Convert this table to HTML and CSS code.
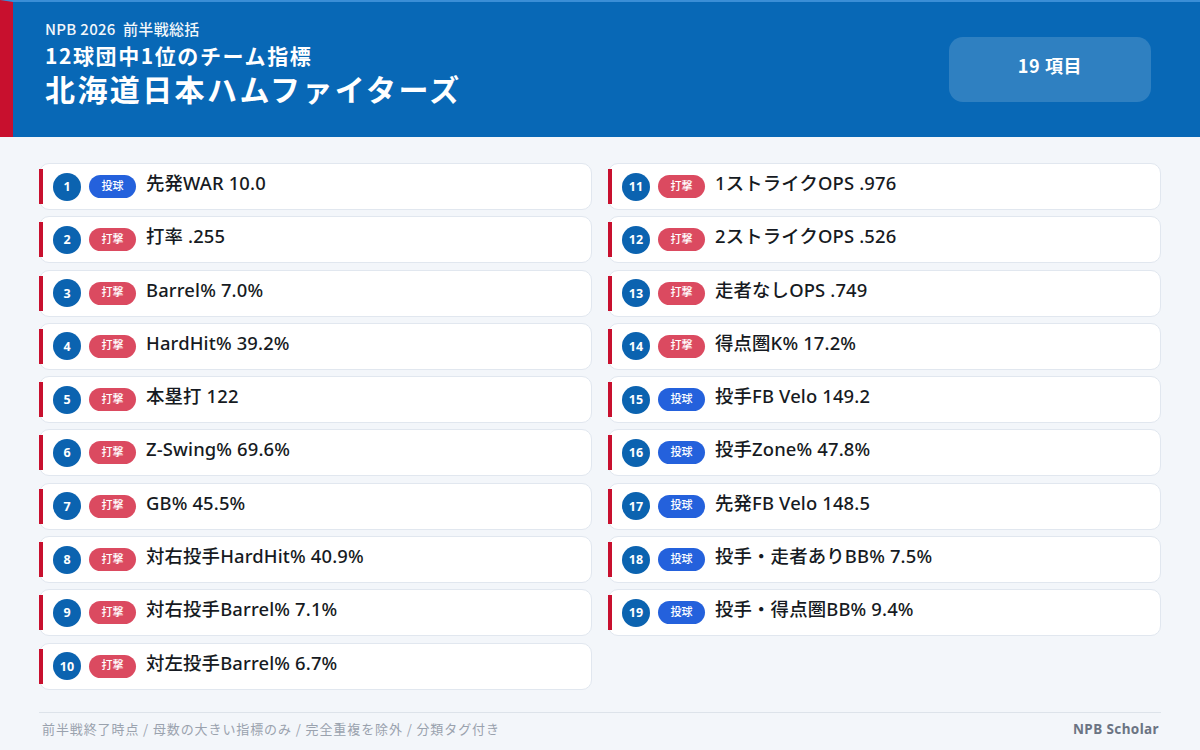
FILE: index.html
```html
<!DOCTYPE html>
<html lang="ja">
<head>
<meta charset="utf-8">
<title>NPB 2026 前半戦総括</title>
<link rel="stylesheet" href="styles.css">
</head>
<body>
<header class="hero">
  <div class="hero-text">
    <div class="kicker">NPB 2026&nbsp;&nbsp;前半戦総括</div>
    <div class="subtitle">12球団中1位のチーム指標</div>
    <h1 class="title">北海道日本ハムファイターズ</h1>
  </div>
  <div class="count">19 項目</div>
</header>
<main class="list">
  <div class="item"><span class="num">1</span><span class="tag pitch">投球</span><span class="label">先発WAR 10.0</span></div>
  <div class="item"><span class="num">2</span><span class="tag bat">打撃</span><span class="label">打率 .255</span></div>
  <div class="item"><span class="num">3</span><span class="tag bat">打撃</span><span class="label">Barrel% 7.0%</span></div>
  <div class="item"><span class="num">4</span><span class="tag bat">打撃</span><span class="label">HardHit% 39.2%</span></div>
  <div class="item"><span class="num">5</span><span class="tag bat">打撃</span><span class="label">本塁打 122</span></div>
  <div class="item"><span class="num">6</span><span class="tag bat">打撃</span><span class="label">Z-Swing% 69.6%</span></div>
  <div class="item"><span class="num">7</span><span class="tag bat">打撃</span><span class="label">GB% 45.5%</span></div>
  <div class="item"><span class="num">8</span><span class="tag bat">打撃</span><span class="label">対右投手HardHit% 40.9%</span></div>
  <div class="item"><span class="num">9</span><span class="tag bat">打撃</span><span class="label">対右投手Barrel% 7.1%</span></div>
  <div class="item"><span class="num">10</span><span class="tag bat">打撃</span><span class="label">対左投手Barrel% 6.7%</span></div>
  <div class="item"><span class="num">11</span><span class="tag bat">打撃</span><span class="label">1ストライクOPS .976</span></div>
  <div class="item"><span class="num">12</span><span class="tag bat">打撃</span><span class="label">2ストライクOPS .526</span></div>
  <div class="item"><span class="num">13</span><span class="tag bat">打撃</span><span class="label">走者なしOPS .749</span></div>
  <div class="item"><span class="num">14</span><span class="tag bat">打撃</span><span class="label">得点圏K% 17.2%</span></div>
  <div class="item"><span class="num">15</span><span class="tag pitch">投球</span><span class="label">投手FB Velo 149.2</span></div>
  <div class="item"><span class="num">16</span><span class="tag pitch">投球</span><span class="label">投手Zone% 47.8%</span></div>
  <div class="item"><span class="num">17</span><span class="tag pitch">投球</span><span class="label">先発FB Velo 148.5</span></div>
  <div class="item"><span class="num">18</span><span class="tag pitch">投球</span><span class="label">投手・走者ありBB% 7.5%</span></div>
  <div class="item"><span class="num">19</span><span class="tag pitch">投球</span><span class="label">投手・得点圏BB% 9.4%</span></div>
</main>
<footer class="foot">
  <span class="note">前半戦終了時点 / 母数の大きい指標のみ / 完全重複を除外 / 分類タグ付き</span>
  <span class="brand">NPB Scholar</span>
</footer>
</body>
</html>
```
FILE: styles.css
```css
* { box-sizing: border-box; }
html, body { margin: 0; padding: 0; }
body {
  width: 1200px;
  height: 750px;
  overflow: hidden;
  background: #f3f6fa;
  font-family: "Noto Sans", "Noto Sans CJK JP", sans-serif;
  color: #161a22;
}
.hero {
  height: 137px;
  background: #0868b6;
  border-top: 2px solid #3b8ed6;
  border-left: 13px solid #c8102e;
  display: flex;
  align-items: center;
  justify-content: space-between;
  padding: 0 49px 0 32px;
  color: #fff;
}
.hero-text {
  display: flex;
  flex-direction: column;
  font-family: "Noto Sans CJK JP", sans-serif;
  margin-top: -15px;
}
.kicker {
  font-size: 15px;
  font-weight: 500;
  line-height: 20px;
  letter-spacing: 0.3px;
  opacity: 0.95;
}
.subtitle {
  font-size: 21px;
  font-weight: 700;
  line-height: 28px;
  letter-spacing: 1.6px;
  margin-top: 2px;
}
.title {
  margin: 1px 0 0;
  font-size: 30px;
  font-weight: 700;
  line-height: 36px;
  letter-spacing: 2.4px;
}
.count {
  width: 202px;
  height: 65px;
  border-radius: 14px;
  background: rgba(255, 255, 255, 0.16);
  display: flex;
  align-items: center;
  justify-content: center;
  font-family: "Noto Sans CJK JP", sans-serif;
  font-size: 18px;
  font-weight: 700;
  letter-spacing: 0.6px;
  padding-bottom: 10px;
}
.list {
  display: grid;
  grid-template-columns: 1fr 1fr;
  grid-template-rows: repeat(10, 47px);
  grid-auto-flow: column;
  column-gap: 16px;
  row-gap: 6.3px;
  padding: 26px 39px 0;
}
.item {
  position: relative;
  background: #fff;
  border: 1px solid #e1e7ef;
  border-radius: 10px;
  display: flex;
  align-items: center;
  padding-left: 13px;
}
.item::before {
  content: "";
  position: absolute;
  left: -1px;
  top: 5px;
  bottom: 5px;
  width: 4px;
  background: #c8102e;
}
.num {
  width: 28px;
  height: 28px;
  border-radius: 50%;
  background: #0b63b0;
  color: #fff;
  font-size: 12.5px;
  font-weight: 700;
  display: flex;
  align-items: center;
  justify-content: center;
  flex: none;
}
.tag {
  width: 47px;
  height: 23px;
  border-radius: 12px;
  margin-left: 8px;
  color: #fff;
  font-family: "Noto Sans CJK JP", sans-serif;
  font-size: 11px;
  font-weight: 500;
  display: flex;
  align-items: center;
  justify-content: center;
  padding-bottom: 4px;
  flex: none;
}
.tag.pitch { background: #2461dc; }
.tag.bat { background: #db4a60; }
.label {
  margin-left: 10px;
  font-size: 18.4px;
  font-weight: 500;
  line-height: 24px;
  letter-spacing: 0.15px;
  margin-bottom: 7px;
  white-space: nowrap;
}
.foot {
  margin: 22px 39px 0;
  border-top: 1px solid #dde3ea;
  display: flex;
  justify-content: space-between;
  align-items: center;
  padding: 7px 2px 0 3px;
  font-family: "Noto Sans CJK JP", sans-serif;
  font-size: 13px;
  line-height: 18px;
}
.note { color: #9aa2ae; letter-spacing: 0.9px; }
.brand {
  color: #6b7483;
  font-weight: 700;
  font-size: 13.5px;
  letter-spacing: 0.4px;
  font-family: "Noto Sans", "Noto Sans CJK JP", sans-serif;
}
```
